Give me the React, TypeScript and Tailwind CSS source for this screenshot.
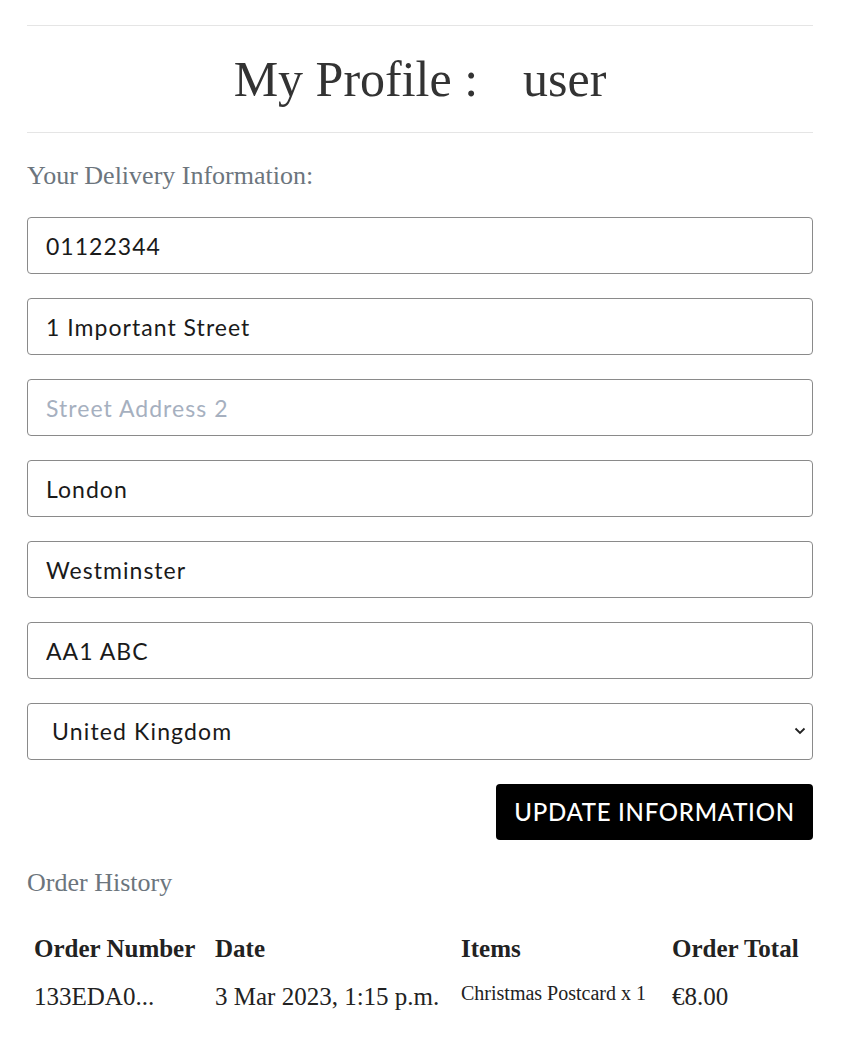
import React from "react";

const serif = { fontFamily: '"Liberation Serif", "DejaVu Serif", serif' };

function Field({ value, placeholder }: { value?: string; placeholder?: string }) {
  return (
    <input
      readOnly
      value={value ?? ""}
      placeholder={placeholder}
      className="h-[57px] w-full rounded-[4px] border border-[#8a8a8a] bg-white px-[18px] text-[23px] text-[#1a1a1a] placeholder:text-[#a6b0bf] outline-none"
      style={{ fontFamily: 'Lato, "Noto Sans", sans-serif', letterSpacing: "0.045em" }}
    />
  );
}

export default function App() {
  return (
    <div className="min-h-[1055px] w-full bg-white pl-[27px] pt-[25px]">
      <div className="w-[786px]">
        <div className="border-y border-[#e5e5e5]">
          <h1
            className="flex h-[106px] items-center justify-center text-[50px] text-[#333333]"
            style={serif}
          >
            <span>My Profile :</span>
            <span className="ml-[45px]">user</span>
          </h1>
        </div>

        <p className="mt-[27px] text-[26px] leading-[32px] text-[#6c757d]" style={serif}>
          Your Delivery Information:
        </p>

        <form className="mt-[25px] flex flex-col gap-[24px]">
          <Field value="01122344" />
          <Field value="1 Important Street" />
          <Field placeholder="Street Address 2" />
          <Field value="London" />
          <Field value="Westminster" />
          <Field value="AA1 ABC" />
          <div className="relative">
            <select
              className="h-[57px] w-full appearance-none rounded-[4px] border border-[#8a8a8a] bg-white pl-[24px] text-[23px] text-[#1a1a1a] outline-none"
              style={{ fontFamily: 'Lato, "Noto Sans", sans-serif', letterSpacing: "0.05em" }}
              defaultValue="gb"
            >
              <option value="gb">United Kingdom</option>
            </select>
            <svg
              className="pointer-events-none absolute right-[7px] top-[23px]"
              width="12"
              height="10"
              viewBox="0 0 12 10"
              fill="none"
            >
              <path d="M1.5 2.5 L6 7 L10.5 2.5" stroke="#222" strokeWidth="1.8" />
            </svg>
          </div>
          <div className="flex justify-end">
            <button
              type="button"
              className="h-[56px] w-[317px] rounded-[4px] bg-black text-[24px] font-medium uppercase text-white"
              style={{ fontFamily: 'Lato, "Noto Sans", sans-serif', letterSpacing: "0.03em" }}
            >
              Update Information
            </button>
          </div>
        </form>

        <p className="mt-[27px] text-[26px] leading-[32px] text-[#6c757d]" style={serif}>
          Order History
        </p>

        <table className="mt-[21px] w-full table-fixed text-[#222]" style={serif}>
          <colgroup>
            <col className="w-[181px]" />
            <col className="w-[246px]" />
            <col className="w-[211px]" />
            <col />
          </colgroup>
          <thead>
            <tr className="text-left text-[25px] font-bold">
              <th className="py-[10px] pl-[7px] font-bold">Order Number</th>
              <th className="py-[10px] pl-[7px] font-bold">Date</th>
              <th className="py-[10px] pl-[7px] font-bold">Items</th>
              <th className="py-[10px] pl-[7px] font-bold">Order Total</th>
            </tr>
          </thead>
          <tbody>
            <tr className="text-[25px]">
              <td className="pl-[7px] align-top">133EDA0...</td>
              <td className="pl-[7px] align-top">3 Mar 2023, 1:15 p.m.</td>
              <td className="pl-[7px] align-top text-[20px] leading-[30px]">Christmas Postcard x 1</td>
              <td className="pl-[7px] align-top">€8.00</td>
            </tr>
          </tbody>
        </table>
      </div>
    </div>
  );
}
